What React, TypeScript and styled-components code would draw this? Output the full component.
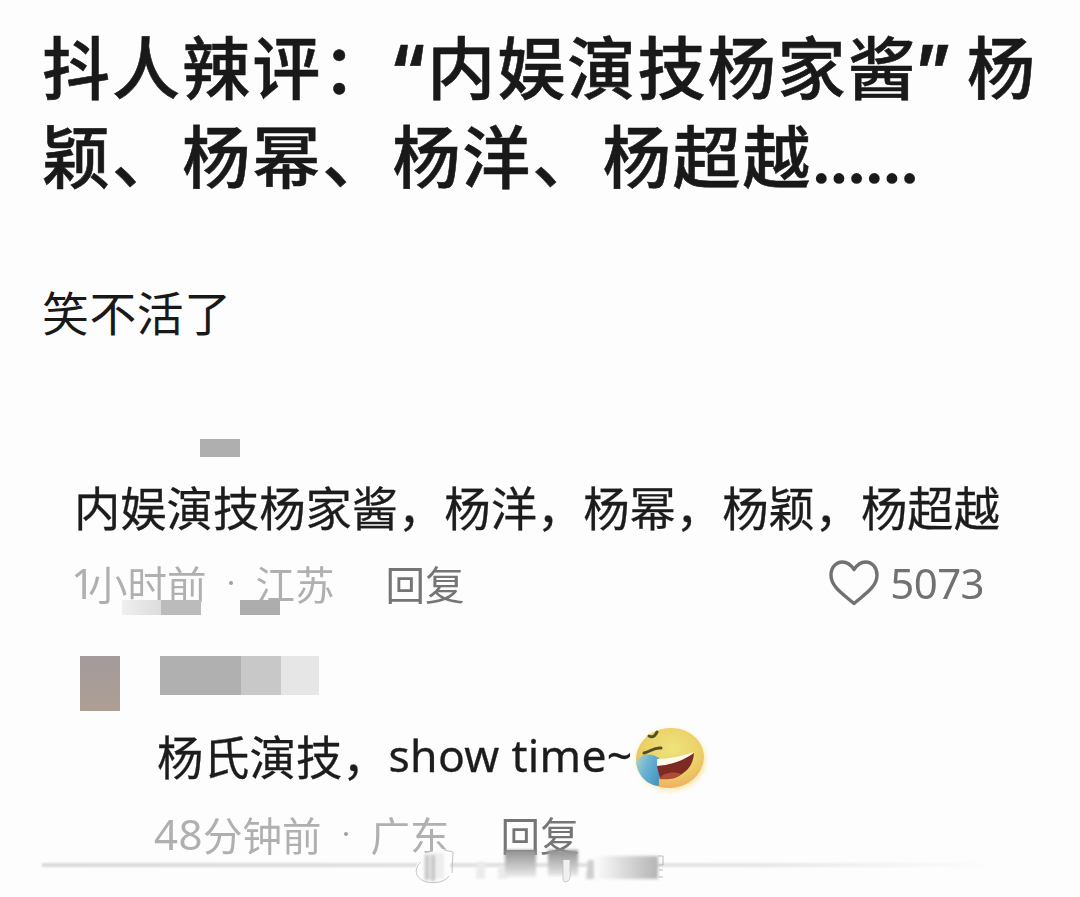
import React from 'react';
import styled, { createGlobalStyle } from 'styled-components';

const GlobalStyle = createGlobalStyle`
  * {
    box-sizing: border-box;
  }

  body {
    margin: 0;
    background: #fdfdfd;
    font-family: 'Noto Sans CJK SC', sans-serif;
  }
`;

const Page = styled.main`
  width: 1080px;
  height: 897px;
  padding: 20px 38px 0 42px;
  overflow: hidden;
  background: #fdfdfd;
`;

const Title = styled.h1`
  margin: 0;
  color: #191919;
  font-size: 68px;
  font-weight: 500;
  letter-spacing: 2.05px;
  line-height: 89px;
  white-space: nowrap;
  -webkit-text-stroke: 0.6px #191919;
`;

const Quote = styled.span<{ $width: number }>`
  display: inline-block;
  width: ${({ $width }) => $width}px;
  font-family: Inter, sans-serif;
  font-weight: 700;
  letter-spacing: 0;
  line-height: 1;
  text-indent: -3px;
`;

const Dots = styled.span`
  font-family: Inter, sans-serif;
  font-size: 50px;
  font-weight: 800;
  letter-spacing: 0;
  line-height: 1;
  -webkit-text-stroke: 1.6px #191919;
`;

const Intro = styled.p`
  margin: 83px 0 0;
  color: #191919;
  font-size: 46.8px;
  letter-spacing: 0.6px;
  line-height: 60px;
`;

const Shot = styled.section`
  position: relative;
  height: 430px;
  margin-top: 98px;
`;

const Comment = styled.article<{ $indent: number; $top: number }>`
  padding: ${({ $top, $indent }) => `${$top}px 0 0 ${$indent}px`};
  filter: blur(0.6px);
`;

const CommentText = styled.p`
  display: flex;
  align-items: center;
  height: 60px;
  margin: 0;
  color: #1c1c1c;
  font-size: 46.3px;
  line-height: 60px;
  white-space: nowrap;
  -webkit-text-stroke: 0.3px #1c1c1c;
`;

const Latin = styled.span<{ $size: number; $spacing: number }>`
  font-family: 'Noto Sans', sans-serif;
  font-size: ${({ $size }) => $size}px;
  letter-spacing: ${({ $spacing }) => $spacing}px;
`;

const Meta = styled.div<{ $top: number }>`
  display: flex;
  align-items: center;
  height: 50px;
  margin: ${({ $top }) => $top}px 0 0 -3px;
  color: #b0b0b0;
  font-size: 39.5px;
  line-height: 50px;
  white-space: nowrap;
`;

const Separator = styled.span`
  width: 4px;
  height: 4px;
  margin: 0 23px 0 22px;
  border-radius: 50%;
  background: #a0a0a0;
`;

const Reply = styled.span`
  margin-left: 51px;
  color: #757575;
`;

const Likes = styled.span`
  display: flex;
  align-items: center;
  gap: 11px;
  margin-left: auto;
  padding-right: 58px;
  color: #717171;
`;

const Emoji = styled.svg`
  width: 76px;
  height: 72px;
  flex: none;
  margin: 8px 0 0 -1px;
`;

// pixelated patches that hide names and avatars
const Mosaic = styled.i<{ $x: number; $y: number; $w: number; $h: number; $fill: string }>`
  position: absolute;
  left: ${({ $x }) => $x}px;
  top: ${({ $y }) => $y}px;
  width: ${({ $w }) => $w}px;
  height: ${({ $h }) => $h}px;
  background: ${({ $fill }) => $fill};
  filter: blur(0.6px);
`;

const BottomLine = styled.hr`
  position: absolute;
  left: 0;
  top: 424px;
  width: 996px;
  height: 4px;
  margin: 0;
  border: 0;
  background: linear-gradient(90deg, #d9d9d9 0, #e4e4e4 70%, #fdfdfd 95%);
  filter: blur(0.8px);
`;

const Watermark = styled.svg`
  position: absolute;
  left: 368px;
  top: 407px;
  width: 260px;
  height: 42px;
`;

const mosaics = [
  { x: 158, y: 0, w: 40, h: 18, fill: '#afafaf' },
  { x: 80, y: 161, w: 40, h: 15, fill: 'linear-gradient(90deg, #efefef, #dcdcdc)' },
  { x: 119, y: 161, w: 40, h: 15, fill: '#bbb' },
  { x: 198, y: 161, w: 40, h: 15, fill: '#adadad' },
  { x: 38, y: 217, w: 40, h: 55, fill: 'linear-gradient(180deg, #a39a9b, #ad9f94)' },
  { x: 118, y: 217, w: 81, h: 39, fill: '#b0b0b0' },
  { x: 199, y: 217, w: 40, h: 39, fill: '#c8c8c8' },
  { x: 239, y: 217, w: 38, h: 39, fill: '#e6e6e6' },
];

const HeartIcon = () => (
  <svg width="50" height="46" viewBox="0 0 50 46" fill="none" stroke="currentColor" strokeWidth="3.4" strokeLinejoin="round">
    <path d="M25 9.500C22 5 18 2 13.500 2C7 2 2 7.500 2 15C2 27 14 34 25 43.500C36 34 48 27 48 15C48 7.500 43 2 36.500 2C32 2 28 5 25 9.500Z" />
  </svg>
);

const LaughingEmoji = () => (
  <Emoji viewBox="0 0 76 72">
    <defs>
      <radialGradient id="face" cx="0.55" cy="0.35" r="0.65">
        <stop offset="0" stopColor="#efe27c" />
        <stop offset="0.65" stopColor="#ead166" />
        <stop offset="1" stopColor="#f0b064" />
      </radialGradient>
      <linearGradient id="tear" x1="0" y1="0" x2="1" y2="0.6">
        <stop offset="0" stopColor="#b5d3bd" />
        <stop offset="0.5" stopColor="#6bb4d6" />
        <stop offset="1" stopColor="#4a9ac2" />
      </linearGradient>
      <filter id="halo">
        <feGaussianBlur stdDeviation="2" />
      </filter>
      <filter id="smooth">
        <feGaussianBlur stdDeviation="0.7" />
      </filter>
    </defs>
    <ellipse cx="39" cy="37" rx="35" ry="31" fill="#fbe6a4" opacity="0.8" filter="url(#halo)" />
    <g filter="url(#smooth)">
      <ellipse cx="38" cy="35" rx="34" ry="30" transform="rotate(-8 38 35)" fill="url(#face)" />
      <path d="M4 39C8 31 18 29 27 35L27 63C14 62 5 51 4 39Z" fill="url(#tear)" />
      <path d="M25 36C38 36 50 33 62 29C58 35 44 42 25 43Z" fill="#fff9ee" />
      <path d="M25 43C40 42 52 37 62 30C61 45 51 56 28 56Z" fill="#7c2922" />
      <path d="M27 56C31 49 42 48 50 51C44 56 36 57 27 56Z" fill="#ad4d35" />
      <path d="M12 30C18 29 22 24 29 25M17 13C21 15 23 13 25 9" fill="none" stroke="#565025" strokeWidth="3" strokeLinecap="round" />
    </g>
  </Emoji>
);

const WatermarkSmear = () => (
  <Watermark viewBox="0 0 260 42">
    <defs>
      <linearGradient id="fade" x1="0" y1="0" x2="0" y2="1">
        <stop offset="0" stopColor="#909090" />
        <stop offset="1" stopColor="#ececec" />
      </linearGradient>
      <linearGradient id="side" x1="0" y1="0" x2="1" y2="0">
        <stop offset="0" stopColor="#fdfdfd" />
        <stop offset="1" stopColor="#b4b4b4" />
      </linearGradient>
      <filter id="soft">
        <feGaussianBlur stdDeviation="1.4" />
      </filter>
    </defs>
    <path d="M10 15C2 22 4 34 18 37C28 39 37 36 38 30L42 6L34 3L12 8Z" fill="#fdfdfd" />
    <g filter="url(#soft)">
      <path d="M14 7H34V33H14Z" fill="#eee" />
      <path d="M17 9V34M23 9V35" stroke="#c4c4c4" strokeWidth="4" />
      <path d="M67 16H75V33H66ZM88 20H98V33H88Z" fill="#ebebeb" />
      <path d="M95 4H126V31H95ZM138 4H168V30H138Z" fill="url(#fade)" />
      <path d="M178 14H184V33H176Z" fill="#cecece" />
      <path d="M184 10H248V33H184Z" fill="url(#side)" />
    </g>
    <path d="M11 16C3 23 5 33 17 36C27 38 36 35 39 30M34 4L43 6L42 27" fill="none" stroke="#b5b5b5" strokeWidth="0.8" />
    <path d="M153 14V32Q153 38 158 35Q161 33 160 24V14" fill="#f0f0f0" stroke="#c0c0c0" strokeWidth="0.8" />
    <path d="M248 10H253V19H249M249 24H253M249 31H253" fill="none" stroke="#aaa" strokeWidth="0.8" />
  </Watermark>
);

export default function App() {
  return (
    <>
      <GlobalStyle />
      <Page>
        <Title>
          抖人辣评：<Quote $width={35}>“</Quote>内娱演技杨家酱<Quote $width={49}>”</Quote>杨
          <br />
          颖、杨幂、杨洋、杨超越<Dots>……</Dots>
        </Title>
        <Intro>笑不活了</Intro>
        <Shot>
          <Comment $indent={32} $top={37}>
            <CommentText>内娱演技杨家酱，杨洋，杨幂，杨颖，杨超越</CommentText>
            <Meta $top={22}>
              <Latin $size={42} $spacing={-7}>1</Latin>
              <span>小时前</span>
              <Separator />
              <span>江苏</span>
              <Reply>回复</Reply>
              <Likes>
                <HeartIcon />
                <Latin $size={42} $spacing={-0.6}>5073</Latin>
              </Likes>
            </Meta>
          </Comment>
          <Comment $indent={115} $top={117}>
            <CommentText>
              杨氏演技，
              <Latin $size={44.5} $spacing={0.3}>show time~</Latin>
              <LaughingEmoji />
            </CommentText>
            <Meta $top={24}>
              <Latin $size={42} $spacing={0.5}>48</Latin>
              <span>分钟前</span>
              <Separator />
              <span>广东</span>
              <Reply>回复</Reply>
            </Meta>
          </Comment>
          {mosaics.map((m, i) => (
            <Mosaic key={i} $x={m.x} $y={m.y} $w={m.w} $h={m.h} $fill={m.fill} />
          ))}
          <BottomLine />
          <WatermarkSmear />
        </Shot>
      </Page>
    </>
  );
}
